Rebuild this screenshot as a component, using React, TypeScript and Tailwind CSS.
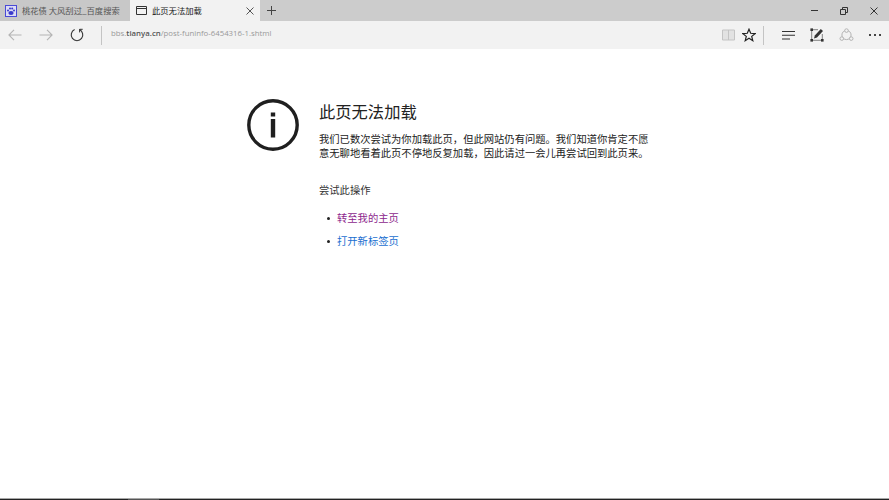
const font = "[font-family:'Noto_Sans_CJK_SC','Liberation_Sans',sans-serif]";

function TabFavicon() {
  return (
    <svg width="12" height="12" viewBox="0 0 12 12" className="shrink-0">
      <rect width="12" height="12" fill="#4a4ad6" />
      <rect x="1" y="1" width="10" height="10" fill="#dcdcf4" />
      <ellipse cx="6" cy="8" rx="2.6" ry="2.1" fill="#3a3acb" />
      <circle cx="3" cy="5.4" r="1" fill="#3a3acb" />
      <circle cx="5" cy="3.4" r="1" fill="#3a3acb" />
      <circle cx="7.2" cy="3.4" r="1" fill="#3a3acb" />
      <circle cx="9" cy="5.4" r="1" fill="#3a3acb" />
    </svg>
  );
}

function ToolbarLeft() {
  return (
    <div className="flex items-center">
      <svg width="14" height="12" viewBox="0 0 14 12" fill="none" stroke="#b4b4b4" strokeWidth="1.1" className="ml-2">
        <path d="M13.5 6H1M6 .8 .9 6 6 11.2" />
      </svg>
      <svg width="14" height="12" viewBox="0 0 14 12" fill="none" stroke="#b4b4b4" strokeWidth="1.1" className="ml-[17px]">
        <path d="M.5 6H13M8 .8 13.1 6 8 11.2" />
      </svg>
      <svg width="14" height="14" viewBox="0 0 14 14" fill="none" stroke="#333" strokeWidth="1.1" className="ml-[17px]">
        <path d="M4.6 1.6A5.8 5.8 0 1 0 9.4 1.6" />
        <path d="M9.6 4.4V1.3H12.7" strokeWidth="1" />
      </svg>
      <div className="ml-[17px] h-[19px] w-px bg-[#c4c4c4]" />
      <div className="mb-[3px] ml-[9px] text-[7.8px] leading-none text-[#999] [font-family:'Open_Sans','Liberation_Sans',sans-serif]">
        bbs.<span className="font-semibold text-[#555]">tianya.cn</span>/post-funinfo-6454316-1.shtml
      </div>
    </div>
  );
}

function ToolbarRight() {
  return (
    <div className="flex items-center">
      <svg width="13" height="12" viewBox="0 0 13 12" fill="#e2e2e2" stroke="#c4c4c4" strokeWidth="1">
        <path d="M.5 1h12v10H.5zM6.5 1v10" />
      </svg>
      <svg width="14" height="14" viewBox="0 0 14 14" fill="none" stroke="#222" strokeWidth="1.2" className="ml-[7px]">
        <path d="M7 1.2 8.7 5.3l4.4.3-3.4 2.8 1.1 4.3L7 10.3l-3.8 2.4 1.1-4.3L.9 5.6l4.4-.3z" />
      </svg>
      <div className="ml-[7px] h-[19px] w-px bg-[#c4c4c4]" />
      <svg width="14" height="11" viewBox="0 0 14 11" fill="none" stroke="#333" strokeWidth="1.1" className="ml-[18px]">
        <path d="M0 1.5h13M0 5.2h13M0 9h8" />
      </svg>
      <svg width="14" height="14" viewBox="0 0 14 14" fill="none" className="ml-[14px]">
        <path d="M1.7 1.7v10.6h10.6V6" stroke="#666" strokeWidth=".8" />
        <path d="M1.7 1.7H8" stroke="#666" strokeWidth=".8" />
        <path d="M4 10.4 4.8 7.4 10.8 1 13 3 7 9.6z" fill="#333" />
        <rect x="0.4" y="0.4" width="2.6" height="2.6" fill="#333" />
        <rect x="0.4" y="11" width="2.6" height="2.6" fill="#333" />
        <rect x="11" y="11" width="2.6" height="2.6" fill="#333" />
      </svg>
      <svg width="15" height="14" viewBox="0 0 15 14" fill="none" stroke="#b4b4b4" strokeWidth="1" className="ml-[15px]">
        <circle cx="7.5" cy="7" r="4.6" />
        <circle cx="7.5" cy="2.6" r="1.8" fill="#f2f2f2" />
        <circle cx="2.8" cy="10.6" r="1.8" fill="#f2f2f2" />
        <circle cx="12.2" cy="10.6" r="1.8" fill="#f2f2f2" />
      </svg>
      <div className="ml-[15px] mr-[8px] flex gap-[3px]">
        <span className="size-[2px] bg-[#444]" />
        <span className="size-[2px] bg-[#444]" />
        <span className="size-[2px] bg-[#444]" />
      </div>
    </div>
  );
}

export default function App() {
  return (
    <div className={`flex h-[500px] w-[889px] flex-col overflow-hidden bg-white ${font}`}>
      {/* Tabs */}
      <div className="flex h-[21px] items-stretch bg-[#cccccc]">
        <div className="flex w-[130px] items-center bg-[#c8c8c8] pl-[5px]">
          <TabFavicon />
          <span className="ml-[5px] whitespace-nowrap text-[8.3px] leading-none text-[#555]">桃花债 大风刮过_百度搜索</span>
        </div>
        <div className="flex w-[130px] items-center bg-[#f2f2f2] pl-[6px]">
          <svg width="11" height="9" viewBox="0 0 11 9" fill="none" stroke="#333" strokeWidth="1">
            <path d="M.5.5h10v8H.5zM.5 2.5h10" />
          </svg>
          <span className="ml-[5px] whitespace-nowrap text-[8.3px] leading-none text-[#222]">此页无法加载</span>
          <svg width="8" height="8" viewBox="0 0 8 8" fill="none" stroke="#555" strokeWidth="1" className="ml-auto mr-[6px]">
            <path d="M.5.5l7 7M7.5.5l-7 7" />
          </svg>
        </div>
        <div className="flex w-[22px] items-center justify-center">
          <svg width="9" height="9" viewBox="0 0 9 9" fill="none" stroke="#444" strokeWidth="1">
            <path d="M4.5 0v9M0 4.5h9" />
          </svg>
        </div>
        {/* Window controls */}
        <div className="ml-auto flex items-center">
          <div className="h-px w-[7px] bg-[#333]" />
          <svg width="8" height="8" viewBox="0 0 8 8" fill="none" stroke="#333" strokeWidth="1" className="ml-[22px]">
            <path d="M.5 2.5h5v5h-5zM2.5 2.5v-2h5v5h-2" />
          </svg>
          <svg width="8" height="8" viewBox="0 0 8 8" fill="none" stroke="#333" strokeWidth="1" className="ml-[22px] mr-[11px]">
            <path d="M.5.5l7 7M7.5.5l-7 7" />
          </svg>
        </div>
      </div>

      {/* Toolbar */}
      <div className="flex h-[28px] items-center justify-between bg-[#f2f2f2]">
        <ToolbarLeft />
        <ToolbarRight />
      </div>

      {/* Error page */}
      <div className="flex flex-1 pl-[247px] pt-[50px]">
        <svg width="52" height="52" viewBox="0 0 52 52" fill="none" className="shrink-0">
          <circle cx="26" cy="26" r="24.2" stroke="#1f1f1f" strokeWidth="3.4" />
          <rect x="23.8" y="20" width="4.4" height="18.5" fill="#1f1f1f" />
          <rect x="23.8" y="13.5" width="4.4" height="4" fill="#1f1f1f" />
        </svg>
        <div className="ml-[20px] w-[332px]">
          <h1 className="mt-px text-[16.3px] font-normal leading-[22px] text-[#222]">此页无法加载</h1>
          <p className="mt-[10px] text-[10.3px] leading-[14px] text-[#222]">
            我们已数次尝试为你加载此页，但此网站仍有问题。我们知道你肯定不愿意无聊地看着此页不停地反复加载，因此请过一会儿再尝试回到此页来。
          </p>
          <p className="mt-[23px] text-[10.3px] leading-[14px] text-[#333]">尝试此操作</p>
          <ul className="mt-[14px] flex flex-col gap-[9px] text-[10.3px] leading-[14px]">
            <li className="flex items-center pl-[8px]">
              <span className="size-[3px] rounded-full bg-[#222]" />
              <a className="ml-[7px] text-[#8d1f8d]">转至我的主页</a>
            </li>
            <li className="flex items-center pl-[8px]">
              <span className="size-[3px] rounded-full bg-[#222]" />
              <a className="ml-[7px] text-[#1a6fd0]">打开新标签页</a>
            </li>
          </ul>
        </div>
      </div>

      {/* Bottom edge */}
      <div className="flex h-px items-stretch bg-[#a8a8a8]" />
      <div className="flex h-px items-stretch bg-[#222]">
        <div className="ml-[128px] w-[31px] bg-[#555]" />
      </div>
    </div>
  );
}
